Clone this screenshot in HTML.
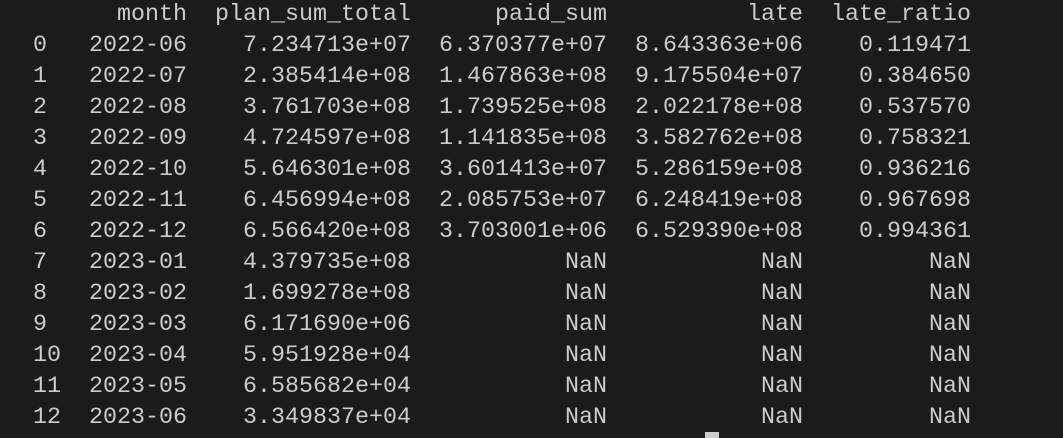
<!DOCTYPE html>
<html><head><style>
html,body{margin:0;padding:0;background:#1b1b1b;width:1063px;height:438px;overflow:hidden}
pre{margin:0;position:absolute;left:33px;top:0px;font-family:"Liberation Mono",monospace;font-size:23.33px;line-height:31px;color:#cccccc;white-space:pre}
.cur{position:absolute;left:705px;top:432px;width:14px;height:6px;background:#cccccc}
</style></head><body>
<pre>      month  plan_sum_total      paid_sum          late  late_ratio
0   2022-06    7.234713e+07  6.370377e+07  8.643363e+06    0.119471
1   2022-07    2.385414e+08  1.467863e+08  9.175504e+07    0.384650
2   2022-08    3.761703e+08  1.739525e+08  2.022178e+08    0.537570
3   2022-09    4.724597e+08  1.141835e+08  3.582762e+08    0.758321
4   2022-10    5.646301e+08  3.601413e+07  5.286159e+08    0.936216
5   2022-11    6.456994e+08  2.085753e+07  6.248419e+08    0.967698
6   2022-12    6.566420e+08  3.703001e+06  6.529390e+08    0.994361
7   2023-01    4.379735e+08           NaN           NaN         NaN
8   2023-02    1.699278e+08           NaN           NaN         NaN
9   2023-03    6.171690e+06           NaN           NaN         NaN
10  2023-04    5.951928e+04           NaN           NaN         NaN
11  2023-05    6.585682e+04           NaN           NaN         NaN
12  2023-06    3.349837e+04           NaN           NaN         NaN</pre>
<div class="cur"></div>
</body></html>
